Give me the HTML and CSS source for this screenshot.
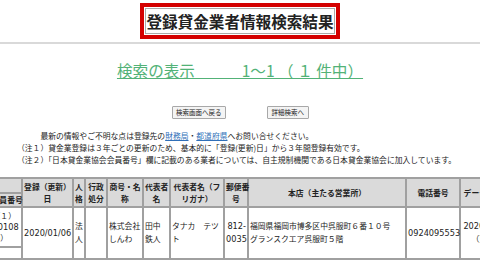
FILE: index.html
```html
<!DOCTYPE html>
<html lang="ja">
<head>
    <meta charset="UTF-8">
    <meta name="viewport" content="width=device-width, initial-scale=1.0">
    <title>登録貸金業者情報検索結果</title>
    <link rel="stylesheet" href="styles.css">
</head>
<body>
    <div class="title-wrap">
        <h1 class="title-box"><span class="title-inner">登録貸金業者情報検索結果</span></h1>
    </div>
    <hr class="rule">

    <p class="count"><a href="#">検索の表示　　　1〜1 （ １ 件中）</a></p>

    <div class="buttons">
        <button type="button">検索画面へ戻る</button>
        <button type="button">詳細検索へ</button>
    </div>

    <div class="notes">
        <p class="lead">最新の情報やご不明な点は登録先の<a href="#">財務局</a>・<a href="#">都道府県</a>へお問い合せください。</p>
        <p>（注１）貸金業登録は３年ごとの更新のため、基本的に「登録(更新)日」から３年間登録有効です。</p>
        <p>（注２）「日本貸金業協会会員番号」欄に記載のある業者については、自主規制機関である日本貸金業協会に加入しています。</p>
    </div>

    <table class="results">
        <thead>
            <tr class="row-h1">
                <th class="w-no">登録番号</th>
                <th class="w-date" rowspan="2">登録（更新）<br>日</th>
                <th class="w-kind" rowspan="2">人<br>格</th>
                <th class="w-admin" rowspan="2">行政<br>処分</th>
                <th class="w-name" rowspan="2">商号・名<br>称</th>
                <th class="w-rep" rowspan="2">代表者<br>名</th>
                <th class="w-kana" rowspan="2">代表者名（フ<br>リガナ）</th>
                <th class="w-zip" rowspan="2">郵便番<br>号</th>
                <th class="w-addr" rowspan="2">本店（主たる営業所）</th>
                <th class="w-tel" rowspan="2">電話番号</th>
                <th class="w-upd" rowspan="2">データ更新日</th>
            </tr>
            <tr class="row-h2">
                <th class="member">日本貸金業協会会員番号</th>
            </tr>
        </thead>
        <tbody>
            <tr class="row-d1">
                <td class="reg-no">福岡財務支局長（１）<br>福岡財務支局第<span class="num">00108</span><br>号（福岡財務支局）</td>
                <td rowspan="2"><span class="num">2020/01/06</span></td>
                <td rowspan="2">法<br>人</td>
                <td rowspan="2"></td>
                <td rowspan="2">株式会社<br>しんわ</td>
                <td rowspan="2">田中<br>鉄人</td>
                <td rowspan="2">タナカ　テツ<br>ト</td>
                <td class="zip" rowspan="2"><span class="num">812-<br>0035</span></td>
                <td rowspan="2">福岡県福岡市博多区中呉服町６番１０号<br>グランスクエア呉服町５階</td>
                <td rowspan="2"><span class="num">0924095553</span></td>
                <td class="upd" rowspan="2"><span class="num">2020/01/06</span><br>（更新）</td>
            </tr>
            <tr class="row-d2">
                <td></td>
            </tr>
        </tbody>
    </table>
</body>
</html>
```

FILE: styles.css
```css
html, body {
    overflow: hidden;
}
body {
    margin: 0;
    padding-top: 3px;
    font-family: "Liberation Sans", "Noto Sans CJK JP", sans-serif;
    color: #222;
    background-color: #fff;
}
a {
    color: #2f6fb8;
}

/* title */
.title-wrap {
    text-align: center;
}
.title-box {
    display: inline-block;
    margin: 0;
    border: 4px solid #d40000;
    padding: 1px;
    font-family: "Noto Sans CJK JP", sans-serif;
    font-size: 15.6px;
    font-weight: bold;
    line-height: 20px;
}
.title-inner {
    display: block;
    border: 1px solid #aaa;
    padding: 2px 0.5px;
}
.rule {
    height: 2px;
    margin: 3px 0 0;
    border: none;
    background-color: #d9d9d9;
}

/* result count */
.count {
    margin: 16px 0 0;
    text-align: center;
    font-family: "Noto Sans CJK JP", sans-serif;
    font-size: 15.6px;
    line-height: 20px;
}
.count a {
    color: #52b277;
}

/* buttons */
.buttons {
    display: flex;
    justify-content: center;
    gap: 41px;
    margin-top: 26px;
}
.buttons button {
    margin: 0;
    padding: 1px 3.5px;
    border: 1px solid #a8a8a8;
    border-radius: 1px;
    background-color: #f4f4f4;
    font-family: "Noto Sans CJK JP", sans-serif;
    font-size: 6.5px;
    line-height: 9px;
    color: #222;
}

/* notes */
.notes {
    margin-top: 11px;
    padding-left: 17px;
    font-family: "Noto Sans CJK JP", sans-serif;
    font-size: 7.8px;
    line-height: 12px;
}
.notes p {
    margin: 0;
    white-space: nowrap;
}
.notes .lead {
    text-indent: 3em;
}

/* results table */
.results {
    table-layout: fixed;
    width: 580px;
    margin: 11px 0 0 -65px;
    border: 1px solid #a0a0a0;
    border-collapse: separate;
    border-spacing: 0;
    font-family: "DejaVu Sans", "Noto Sans CJK JP", sans-serif;
    font-size: 7.8px;
}
.results th, .results td {
    box-sizing: border-box;
    border: 1px solid #a0a0a0;
    padding: 0 1px;
    white-space: nowrap;
    overflow: visible;
}
.results th {
    background-color: #dadada;
    font-family: "Noto Sans CJK JP", sans-serif;
    font-weight: bold;
    line-height: 12px;
    text-align: center;
}
.results td {
    line-height: 13px;
    text-align: left;
}
.row-h1 { height: 15px; }
.row-h2 { height: 14px; }
.row-d1 { height: 40px; }
.row-d2 { height: 12px; }

.w-no { width: 86px; }
.w-date { width: 51px; }
.w-kind { width: 12px; }
.w-admin { width: 22px; }
.w-name { width: 36px; }
.w-rep { width: 27px; }
.w-kana { width: 54px; }
.w-zip { width: 24px; }
.w-addr { width: 158px; }
.w-tel { width: 54px; }
.w-upd { width: 54px; }

.results .member {
    padding: 0;
}
.results .reg-no {
    line-height: 11px;
}
.results .zip {
    text-align: right;
}
.results .upd {
    text-align: center;
}
.num {
    font-family: "DejaVu Sans", sans-serif;
    font-size: 8.2px;
}
```
